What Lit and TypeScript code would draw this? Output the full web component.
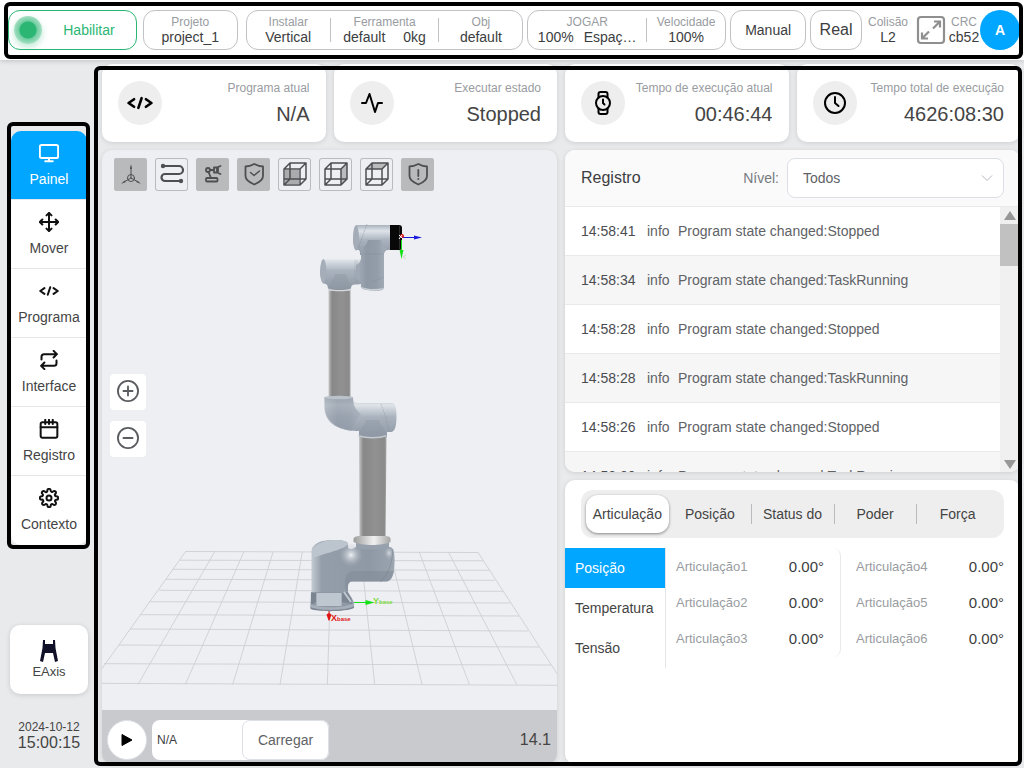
import { LitElement, html, svg, css } from "lit";
import { customElement, state } from "lit/decorators.js";
import { classMap } from "lit/directives/class-map.js";

const line = (size: number, body: unknown, width = 2) => html`
  <svg width=${size} height=${size} viewBox="0 0 24 24" fill="none" stroke="currentColor"
    stroke-width=${width} stroke-linecap="round" stroke-linejoin="round" aria-hidden="true">${body}</svg>`;

const icons = {
  monitor: svg`<rect x="1" y="2.500" width="22" height="15.500" rx="2"/><path d="M12 18v4M7.500 22h9"/>`,
  move: svg`<path d="M12 1v22M1 12h22M9 4l3-3 3 3M9 20l3 3 3-3M4 9l-3 3 3 3M20 9l3 3-3 3"/>`,
  code: svg`<path d="M6.500 8.500L1.500 12l5 3.500M17.500 8.500l5 3.500-5 3.500M13.500 7.500l-3 9"/>`,
  repeat: svg`<path d="M17.500 1l4 4-4 4M3 11.500V8a3 3 0 0 1 3-3h15M6.500 23l-4-4 4-4M21 12.500V16a3 3 0 0 1-3 3H3"/>`,
  calendar: svg`<rect x="2" y="4" width="20" height="18.500" rx="2"/><path d="M2 10h20M7.500 1v5M16.500 1v5M12 1v5"/>`,
  gear: svg`<circle cx="12" cy="12" r="3"/><path d="M19.400 15a1.650 1.650 0 0 0 .33 1.820l.06.06a2 2 0 1 1-2.830 2.830l-.06-.06a1.650 1.650 0 0 0-2.800 1.180V21a2 2 0 0 1-4 0v-.09a1.650 1.650 0 0 0-2.910-1.080l-.06.06a2 2 0 1 1-2.830-2.830l.06-.06A1.650 1.650 0 0 0 3.090 14H3a2 2 0 0 1 0-4h.09a1.650 1.650 0 0 0 1.080-2.910l-.06-.06a2 2 0 1 1 2.830-2.830l.06.06A1.650 1.650 0 0 0 10 3.090V3a2 2 0 0 1 4 0v.09a1.650 1.650 0 0 0 2.910 1.080l.06-.06a2 2 0 1 1 2.830 2.830l-.06.06A1.650 1.650 0 0 0 20.910 10H21a2 2 0 0 1 0 4h-.09a1.650 1.650 0 0 0-1.510 1z"/>`,
  pulse: svg`<path d="M2 12h4L9.500 3l5.500 18 3-9h4"/>`,
  watch: svg`<circle cx="12" cy="12" r="7"/><path d="M12 8.500V12l1.500 1.500M7.500 6.500V3a2 2 0 0 1 2-2h5a2 2 0 0 1 2 2v3.500M7.500 17.500V21a2 2 0 0 0 2 2h5a2 2 0 0 0 2-2v-3.500"/>`,
  clock: svg`<circle cx="12" cy="12" r="10"/><path d="M12 6v6l3.500 3"/>`,
  plus: svg`<circle cx="12" cy="12" r="11"/><path d="M12 7v10M7 12h10"/>`,
  minus: svg`<circle cx="12" cy="12" r="11"/><path d="M7 12h10"/>`,
};

const cube = (face: unknown) => svg`${face}
  <g stroke-width="1.500"><path d="M6 11h16v16H6zM12 5h16v16H22M12 5v16H6M6 11l6-6M22 11l6-6M22 27l6-6M6 27l6-6M12 21h10"/></g>`;
const shield = svg`<path d="M8.500 8.500c3.500 0 6-1 8.800-2.500 2.800 1.500 5.300 2.500 8.700 2.500v9.500c0 4-4 6.500-8.700 8.500-4.700-2-8.800-4.500-8.800-8.500z" stroke-width="1.800"/>`;

const tools = [
  { label: "Eixos", on: true, art: svg`<g stroke-width="1"><circle cx="17" cy="20" r="3.500"/><path d="M17 20V9M17 20l-8 4.500M17 20l8 4.500"/><path d="M17 6l1 5h-2zM7 26l4-3.500.8 1.500zM27 26l-4-3.500-.8 1.500z" fill="currentColor" stroke="none"/></g>` },
  { label: "Trajeto", on: false, art: svg`<g stroke-width="2.200"><path d="M8 8h16a3.800 3.800 0 0 1 0 8H10a3.500 3.500 0 0 0 0 7h15"/></g><circle cx="8" cy="8" r="2.200" fill="currentColor" stroke="none"/><circle cx="26" cy="23" r="2.200" fill="currentColor" stroke="none"/>` },
  { label: "Braço", on: true, art: svg`<g stroke-width="1.800"><rect x="10" y="20" width="11.500" height="3.500" rx="1"/><circle cx="12" cy="12" r="2"/><path d="M12.500 14l2.500 6M14 12h4M18 9.500v5h3l3.500 1.500M21 14.500v-5l3.500-1.500M21 9.500h-3M22 10.500v3"/></g>` },
  { label: "Segurança", on: true, art: svg`${shield}<path d="M13.500 14.500l3.500 3 5.500-4.500" stroke-width="1.500"/>` },
  { label: "Vista frontal", on: false, art: cube(svg`<path d="M7 12h14v14H7z" fill="#a9abad" stroke="none"/>`) },
  { label: "Vista lateral", on: false, art: cube(svg`<path d="M22 11l6-6v16l-6 6z" fill="#b9bbbd" stroke="none"/>`) },
  { label: "Vista superior", on: false, art: cube(svg`<path d="M6 11l6-6h16l-6 6z" fill="#b9bbbd" stroke="none"/>`) },
  { label: "Aviso", on: true, art: svg`${shield}<path d="M17.300 12v6" stroke-width="1.800"/><circle cx="17.300" cy="21" r="1" fill="currentColor" stroke="none"/>` },
];

const navItems = [
  { label: "Painel", icon: icons.monitor },
  { label: "Mover", icon: icons.move },
  { label: "Programa", icon: icons.code },
  { label: "Interface", icon: icons.repeat },
  { label: "Registro", icon: icons.calendar },
  { label: "Contexto", icon: icons.gear },
];

const stats = [
  { label: "Programa atual", value: "N/A", icon: icons.code },
  { label: "Executar estado", value: "Stopped", icon: icons.pulse },
  { label: "Tempo de execução atual", value: "00:46:44", icon: icons.watch },
  { label: "Tempo total de execução", value: "4626:08:30", icon: icons.clock },
];

const logs = [
  ["14:58:41", "Stopped"],
  ["14:58:34", "TaskRunning"],
  ["14:58:28", "Stopped"],
  ["14:58:28", "TaskRunning"],
  ["14:58:26", "Stopped"],
  ["14:58:20", "TaskRunning"],
];

// Floor grid in scene units: [left x, left y, right x, right y] per row
const floorRows = [
  [185, 551.5, 478, 552.5], [180, 560.2, 483, 560.8], [173, 569.3, 489, 570.3], [166, 579.3, 495, 580.3],
  [159, 590.3, 503, 591.3], [150, 601.7, 510, 603], [140, 614.7, 519, 616], [130, 629, 528, 631],
  [118.7, 645, 539, 647], [104, 663.7, 551, 665], [90, 683.3, 566, 685.3],
];
const floorColumns = Array.from({ length: 11 }, (_, i) => [185.3 + i * 29.24, 90.6 + i * 47.35]);

const scene = html`
  <svg class="scene" viewBox="102 150 455 560" preserveAspectRatio="xMidYMid slice" role="img" aria-label="Modelo 3D do robô">
    <defs>
      <linearGradient id="h" x1="0" y1="0" x2="0" y2="1">
        <stop offset="0" stop-color="#a9b2bc"/><stop offset=".2" stop-color="#dfe4e9"/><stop offset=".5" stop-color="#a9b2bd"/><stop offset="1" stop-color="#8f99a5"/>
      </linearGradient>
      <linearGradient id="v" x1="0" y1="0" x2="1" y2="0">
        <stop offset="0" stop-color="#a6afba"/><stop offset=".35" stop-color="#8f99a5"/><stop offset=".7" stop-color="#939da9"/><stop offset="1" stop-color="#a5aeb9"/>
      </linearGradient>
      <linearGradient id="body" x1="0" y1="0" x2="1" y2="0">
        <stop offset="0" stop-color="#c3cad2"/><stop offset=".12" stop-color="#949eaa"/><stop offset=".7" stop-color="#8f99a5"/><stop offset="1" stop-color="#9ba5b0"/>
      </linearGradient>
      <linearGradient id="tube" x1="0" y1="0" x2="1" y2="0">
        <stop offset="0" stop-color="#c8c9ca"/><stop offset=".08" stop-color="#a5a5a5"/><stop offset=".16" stop-color="#888"/><stop offset=".6" stop-color="#919191"/><stop offset=".92" stop-color="#8a8a8a"/><stop offset="1" stop-color="#a5a5a5"/>
      </linearGradient>
      <linearGradient id="ring" x1="0" y1="0" x2="1" y2="0">
        <stop offset="0" stop-color="#9c9c9c"/><stop offset=".55" stop-color="#f1f1f1"/><stop offset="1" stop-color="#a6a6a6"/>
      </linearGradient>
      <radialGradient id="glow"><stop offset="0" stop-color="#eef1f4"/><stop offset="1" stop-color="#a4adb8" stop-opacity="0"/></radialGradient>
    </defs>
    <g stroke="#cdcfd1" stroke-width=".9">
      ${floorRows.map(([a, b, c, d]) => svg`<line x1=${a} y1=${b} x2=${c} y2=${d}/>`)}
      ${floorColumns.map(([a, b]) => svg`<line x1=${a} y1="552" x2=${b} y2="684.500"/>`)}
    </g>

    <path d="M328.500 288h22v110h-22z" fill="url(#tube)"/>
    <path d="M359 434h27.500l-1 106h-26z" fill="url(#tube)"/>

    <path d="M323 259.500h36c4 0 6-2 9-7v28c-3 3-7 4-12 4-4 0-5 1-5 5h-23c0-4-1-6-5-6-4-5-4-19 0-24z" fill="url(#h)"/>
    <path d="M356 225h35v25h-4c-2 1-3 2-3 5h-24c0-4 0-3-1-5h-3c-4-4-4-20 0-25z" fill="url(#h)"/>
    <path d="M361 249c4-2 6-5 7-9h13c1 4 3 7 5 9-1.500 1-2 3-2 6v32c0 2-1 3-4 3.500-6 .5-13 0-17-1.500-2-1-2-2-2-4v-4c-3-1-5-2-5-4v-12c3-1 4-3 5-6z" fill="url(#v)"/>
    <path d="M360 286.500c5 2.500 15 3.500 23.500 1.500-1 2-4 2.500-8 2.500-6 0-13-.5-15.500-4z" fill="#c9d0d6"/>
    <ellipse cx="356" cy="238" rx="3" ry="12.500" fill="#a3acb7"/>
    <path d="M367 224c-4 10-6 18-9 24M362 254h22M372 282l12-5" stroke="#79838f" stroke-width=".4" stroke-dasharray="2 1" fill="none"/>
    <path d="M355 260v23M357 260v24" stroke="#8a949f" stroke-width=".5" opacity=".6"/>
    <path d="M329 289c0-8 5-9 6-15h11c1 6 5 8 5 15z" fill="#8b95a1" opacity=".4"/>
    <path d="M328 288.500c7 2 16 2 23 0v2c-6 1-16 1-23 0z" fill="#d6dade"/>
    <ellipse cx="323.300" cy="271" rx="3" ry="12" fill="#a4adb8"/>
    <path d="M390 225h9c2 0 3 1 3 3v19c0 2-1 3-3 3h-9z" fill="#080808"/>
    <path d="M399.500 226v23" stroke="#444" stroke-width=".6"/>

    <path d="M324.500 397h28.500c0 5 1 6 5 6h34c3 0 4.500 4 4.500 13 0 10-1.500 15-5 16h-4.500v5h-28v-6c-19 0-34-8-34.500-26z" fill="url(#h)"/>
    <path d="M324.500 397h28.500c0 8 2 12 8 17-5 6-8 12-9 17-16-2-28-9-27.500-25z" fill="url(#v)" opacity=".7"/>
    <path d="M359 436c0-8 6-10 7-16h13c1 6 7 8 7 16z" fill="#8d97a3" opacity=".4"/>
    <ellipse cx="338.700" cy="397.500" rx="14.400" ry="1.800" fill="#bac2ca"/>
    <path d="M358.500 435c8 2.500 20 2.500 28 0v1.500c-7 2.500-21 2.500-28 0z" fill="#c2c9d0"/>
    <path d="M381 404c3 8 6 16 8 28" stroke="#818b97" stroke-width=".4" stroke-dasharray="2 1" fill="none"/>

    <path d="M311.500 550c1-6 9-10 22-10 9 0 14 1 14.500 4v4c3 2 5 1 8-1h34c3 0 5 5 4.500 16-.3 12-3.500 18.500-8 18.500h-34c-3 0-4.500 2-4.500 5v7c-8 4-29 4-36.500 0z" fill="url(#body)"/>
    <path d="M312.500 556c-2-9 7-16 22-16 8 0 13 1 13.500 4 0 4-21 9-32.500 13-1 .5-2.500 0-3-1z" fill="#bcc4cd"/>
    <path d="M352 571h42c-1 7-4 10.500-8 10.500h-34c-3 0-4.500 2-4.500 5v5c-4-4-4-18 4.500-20.500z" fill="#808a97" opacity=".5"/>
    <ellipse cx="351" cy="555" rx="12" ry="12" fill="url(#glow)"/>
    <ellipse cx="389" cy="553" rx="5" ry="7" fill="url(#glow)" opacity=".7"/>
    <path d="M393 549c-1 14-4 25-13 33" stroke="#77818d" stroke-width=".5" fill="none"/>
    <path d="M356 542h33v6c-8 2-25 2-33 0z" fill="#97a1ad"/>
    <path d="M353.500 539c0-2 3-3 6-3h26c3 0 5 1 5 3v3c-8 4-29 4-37 0z" fill="url(#ring)"/>
    <path d="M311 592l-.5 15c4 4 37 5 43.500-1 1-4-3-9-6-14z" fill="#8f99a5"/>
    <path d="M316.500 593h25v13h-25z" fill="#bec7d0"/>
    <path d="M311 593h5v9l-5 3zM342 593l5-1 5 8v4l-10-2z" fill="#7b8591"/>
    <path d="M344 592l7 10" stroke="#c0c8d0" stroke-width="2"/>
    <path d="M310.500 604c10 5 36 4 43.500-1v4c-8 5-36 5-43.500 1z" fill="#a5aeb9"/>
    <path d="M310.500 607c8 4 36 4 43.500-1v2c-8 4-36 4-43.500 1z" fill="#7e8894"/>

    <path d="M402 237.500h13" stroke="#1b1be0"/><path d="M414 235.500l8 2-8 2z" fill="#1b1be0"/>
    <path d="M401.500 240v12" stroke="#16e016"/><path d="M399.500 250h4l-2 9z" fill="#16e016"/>
    <circle cx="402" cy="236" r="2" fill="#e01616"/><path d="M399 235l3 3m0-3l-3 4" stroke="#fff" stroke-width="1"/>
    <path d="M406 255l-3 2 3 2" stroke="#ccc" stroke-width=".8" fill="none"/>
    <path d="M354 602.500h12" stroke="#16e016"/><path d="M365.500 600l9 2.500-9 2.500z" fill="#16e016"/>
    <path d="M329 611v4" stroke="#e01616"/><path d="M326.500 614.500l2.500-1.500 2.500 1.500-2 6h-1z" fill="#e01616"/>
    <text x="373" y="604" class="axis axis-y">Y<tspan class="sub">base</tspan></text>
    <text x="331" y="621" class="axis axis-x">X<tspan class="sub">base</tspan></text>
  </svg>`;

@customElement("app-root")
export class AppRoot extends LitElement {
  @state() private page = 0;
  @state() private tab = 0;
  @state() private measure = 0;

  static styles = css`
    :host {
      display: grid;
      grid-template-rows: 60px minmax(0, 1fr);
      height: 100vh;
      overflow: hidden;
      background: #e9eaec;
      color: #3c3d40;
      font: 14px/16px "Liberation Sans", Arial, sans-serif;
    }
    * { box-sizing: border-box; }
    button, input, select { font: inherit; color: inherit; margin: 0; padding: 0; border: 0; background: none; }
    button, select { cursor: pointer; }
    svg { display: block; }
    h2, p { margin: 0; font-weight: 400; }

    .framed { position: relative; }
    .framed::after {
      content: "";
      position: absolute;
      border: 4px solid #000;
      border-radius: 6px;
      pointer-events: none;
      z-index: 2;
    }

    .top {
      display: flex;
      align-items: center;
      padding: 0 4px 0 8px;
      background: #fff;
      box-shadow: 0 1px 5px rgba(0, 0, 0, 0.18);
      z-index: 1;
    }
    .top::after { inset: 2px 1px 1px 4px; }
    .box {
      display: flex;
      align-items: center;
      justify-content: center;
      height: 40px;
      min-width: 0;
      border: 1px solid #c0c2c6;
      border-radius: 12px;
      background: #fff;
    }
    .enable { flex: 129 1 129px; border-color: #2bb673; color: #2bb673; padding-left: 5px; }
    .enable span { flex: 1; }
    .lamp {
      width: 28px;
      height: 28px;
      border-radius: 50%;
      background: radial-gradient(circle, #2bb673 0 8px, #6fcda0 9px, #a6e0c4 14px);
      box-shadow: 0 3px 6px rgba(43, 182, 115, 0.3);
    }
    .project { flex: 95 1 95px; margin-left: 6px; }
    .setup { flex: 278 1 278px; margin-left: 8px; }
    .play { flex: 199 1 199px; margin-left: 4px; }
    .mode { flex: 76 1 76px; margin-left: 4px; }
    .real { flex: 52 1 52px; margin-left: 4px; font-size: 16px; }
    .collision { flex: 40 1 40px; margin-left: 6px; }
    .expand { margin: 0 2px 0 8px; color: #8f8f8f; }
    .crc { width: 32px; }
    .cell { display: flex; flex-direction: column; justify-content: center; align-items: center; white-space: nowrap; }
    .cell small { font-size: 12px; line-height: 14px; color: #999ca1; }
    .pair { display: flex; }
    .setup .cell, .play .cell { flex: 84 1 0; height: 24px; }
    .setup .cell.wide { flex-grow: 109; }
    .play .cell { flex-grow: 79; }
    .play .cell.wide { flex-grow: 119; }
    .cell + .cell { border-left: 1px solid #c0c2c6; }
    .setup .pair { gap: 18px; }
    .play .pair { gap: 10px; }
    .avatar {
      flex: none;
      width: 40px;
      height: 40px;
      border-radius: 50%;
      background: #00a6ff;
      color: #fff;
      font-weight: 700;
    }

    .body { display: grid; grid-template-columns: 98px minmax(0, 1fr); min-height: 0; }
    .side { display: flex; flex-direction: column; align-items: center; padding: 71px 0 17px; }
    .nav { width: 76px; }
    .nav::after { inset: -9px -3px -4px -4px; }
    .nav a {
      display: flex;
      flex-direction: column;
      align-items: center;
      gap: 8px;
      height: 69px;
      padding-top: 12px;
      border-bottom: 1px solid #e6e7e9;
      background: #fff;
      color: #444;
      text-decoration: none;
    }
    .nav a svg { color: #111; }
    .nav a:first-child { border-radius: 10px 10px 0 0; }
    .nav a:last-child { border-radius: 0 0 10px 10px; border-bottom: 0; }
    .nav a.on { background: #00a6ff; color: #fff; }
    .nav a.on svg { color: #fff; }
    .eaxis {
      display: flex;
      flex-direction: column;
      align-items: center;
      justify-content: center;
      gap: 2px;
      width: 78px;
      height: 69px;
      margin: auto 0 26px;
      border-radius: 10px;
      background: #fff;
      box-shadow: 0 1px 5px rgba(0, 0, 0, 0.15);
      font-size: 13px;
      color: #444;
    }
    .now { display: flex; flex-direction: column; align-items: center; color: #444; }
    .now span { font-size: 12px; line-height: 14px; }
    .now strong { font-size: 16px; line-height: 17px; font-weight: 400; }

    .main {
      display: grid;
      grid-template-rows: 78px minmax(0, 1fr);
      gap: 8px;
      padding: 4px;
      min-height: 0;
    }
    .main::after { inset: 6px 2px 2px -4px; }
    .stats { display: grid; grid-template-columns: repeat(4, minmax(0, 1fr)); gap: 8px; }
    .card { background: #fff; border-radius: 10px; box-shadow: 0 1px 5px rgba(0, 0, 0, 0.12); }
    .stat { display: flex; align-items: center; justify-content: space-between; padding: 0 16px; white-space: nowrap; }
    .disc { display: grid; place-items: center; width: 44px; height: 44px; border-radius: 50%; background: #eee; color: #000; }
    .figures { display: flex; flex-direction: column; align-items: flex-end; gap: 8px; }
    .figures small { font-size: 12px; line-height: 14px; color: #999ca1; }
    .figures strong { font-size: 20px; line-height: 22px; font-weight: 400; color: #444; }

    .columns { display: grid; grid-template-columns: repeat(2, minmax(0, 1fr)); gap: 8px; min-height: 0; }
    .robot { display: grid; grid-template-rows: minmax(0, 1fr) 54px; overflow: hidden; background: #eeeff3; }
    .stage { display: grid; min-height: 0; }
    .stage > * { grid-area: 1 / 1; }
    .scene { width: 100%; height: 100%; min-height: 0; }
    .axis { font-size: 9px; font-weight: 700; }
    .axis-x { fill: #e01616; }
    .axis-y { fill: #7ddc3c; }
    .sub { font-size: 6px; }
    .tools { display: flex; gap: 8px; align-self: start; padding: 8px 12px; z-index: 1; }
    .tool { width: 33px; height: 33px; border-radius: 3px; box-shadow: inset 0 0 0 1px #b9bbbd; color: #4d4f52; }
    .tool.on { background: #b9babb; }
    .zoom { display: flex; flex-direction: column; gap: 11px; align-self: center; justify-self: start; padding: 0 8px; margin-bottom: 29px; z-index: 1; }
    .zoom button { display: grid; place-items: center; width: 36px; height: 36px; padding-bottom: 2px; border-radius: 4px; background: #fff; color: #5a5c60; }
    .player { display: flex; align-items: center; padding: 6px 6px 0 5px; background: #c9cacd; }
    .run { display: grid; place-items: center; width: 40px; height: 40px; border-radius: 50%; background: #fff; border: 1px solid #dcdfe6; }
    .loader { display: flex; width: 177px; height: 40px; margin: 0 auto 0 5px; border-radius: 8px; background: #fff; }
    .loader input { flex: 1; min-width: 0; padding-left: 5px; font-size: 12px; }
    .loader button { width: 87px; border: 1px solid #dcdfe6; border-radius: 8px; color: #606266; }
    .speed { font-size: 16px; color: #444; }

    .right { display: grid; grid-template-rows: minmax(0, 322fr) minmax(0, 284fr); gap: 8px; min-height: 0; }
    .log { display: grid; grid-template-rows: 57px minmax(0, 1fr); overflow: hidden; }
    .log-head { display: flex; align-items: center; padding: 0 16px; background: #fafafa; border-bottom: 1px solid #e8e9eb; }
    .log-head h2 { flex: 1; font-size: 16px; line-height: 18px; }
    .log-head label { color: #777a7f; margin-right: 8px; }
    .picker { display: grid; align-items: center; width: 217px; }
    .picker > * { grid-area: 1 / 1; }
    .picker select { appearance: none; width: 100%; height: 40px; padding: 0 32px 0 15px; border: 1px solid #dcdfe6; border-radius: 8px; background: #fff; color: #606266; }
    .picker svg { justify-self: end; margin-right: 10px; color: #b4b8c0; pointer-events: none; }
    .log-body { display: grid; grid-template-columns: minmax(0, 1fr) 20px; min-height: 0; }
    .rows { margin: 0; padding: 0; list-style: none; overflow: hidden; color: #606266; }
    .rows li { display: flex; align-items: center; height: 49px; padding: 0 16px; border-bottom: 1px solid #e8e9eb; background: #fff; }
    .rows li:nth-child(even) { background: #f6f6f6; }
    .rows time { width: 66px; color: #4a4c50; }
    .rows span { width: 31px; }
    .bar { display: flex; flex-direction: column; align-items: center; padding: 4px 0 3px; background: #f0f0f0; color: #979797; }
    .thumb { width: 100%; height: 42px; margin: 4px 0 auto; background: #c1c1c1; }

    .joints { padding: 10px 0 0; overflow: hidden; }
    .tabs { display: grid; grid-template-columns: repeat(5, minmax(0, 1fr)); margin: 0 16px 10px; padding: 5px; border-radius: 12px; background: #eee; }
    .tabs button { position: relative; height: 38px; border-radius: 12px; color: #444; white-space: nowrap; }
    .tabs button.on { background: #fff; box-shadow: 0 1px 3px rgba(0, 0, 0, 0.45); }
    .tabs button.split::before { content: ""; position: absolute; left: 0; top: 9px; height: 20px; border-left: 1px solid #b8babd; }
    .detail { display: grid; grid-template-columns: 101px minmax(0, 175fr) minmax(0, 179fr); align-items: start; }
    .measures { display: flex; flex-direction: column; border-right: 1px solid #e4e5e7; }
    .measures button { height: 40px; padding-left: 10px; text-align: left; color: #444; }
    .measures button.on { background: #00a6ff; color: #fff; }
    .axes { margin: 0; padding: 1px 16px 0 10px; }
    .axes.first { border-right: 1px solid #e8e9eb; border-radius: 8px; }
    .axes + .axes { padding-left: 15px; }
    .axes div { display: flex; align-items: center; justify-content: space-between; height: 36px; }
    .axes dt { font-size: 13px; color: #999ca1; }
    .axes dd { margin: 0; font-size: 15px; }
  `;

  private cell(label: string, values: string[], extra = "") {
    return html`<div class="cell ${extra}"><small>${label}</small><div class="pair">${values.map((v) => html`<span>${v}</span>`)}</div></div>`;
  }

  private header() {
    return html`
      <header class="top framed">
        <button class="box enable"><i class="lamp"></i><span>Habilitar</span></button>
        <button class="box project">${this.cell("Projeto", ["project_1"])}</button>
        <div class="box setup">
          ${this.cell("Instalar", ["Vertical"])}${this.cell("Ferramenta", ["default", "0kg"], "wide")}${this.cell("Obj", ["default"])}
        </div>
        <div class="box play">${this.cell("JOGAR", ["100%", "Espaç…"], "wide")}${this.cell("Velocidade", ["100%"])}</div>
        <button class="box mode">Manual</button>
        <button class="box real">Real</button>
        <div class="collision">${this.cell("Colisão", ["L2"])}</div>
        <button class="expand" aria-label="Tela cheia">
          <svg width="30" height="30" viewBox="0 0 30 30" fill="none" stroke="currentColor" stroke-width="2.200">
            <rect x="2" y="2" width="26" height="26" rx="3"/>
            <path d="M18 6.500h6v6M24 6.500l-7 7M12 23.500H6v-6M6 23.500l7-7" stroke-width="2.200"/>
          </svg>
        </button>
        <div class="crc">${this.cell("CRC", ["cb52"])}</div>
        <button class="avatar" aria-label="Conta">A</button>
      </header>`;
  }

  private sidebar() {
    return html`
      <aside class="side">
        <nav class="nav framed">
          ${navItems.map((item, i) => html`
            <a href="#" class=${classMap({ on: i === this.page })} @click=${(e: Event) => { e.preventDefault(); this.page = i; }}>
              ${line(20, item.icon, 2.4)}<span>${item.label}</span>
            </a>`)}
        </nav>
        <button class="eaxis">
          <svg width="18" height="22" viewBox="0 0 18 22" fill="#101028" aria-hidden="true"><path d="M3 0h2v4h8V0h2l.500 8L18 21l-3 1-2-9H5l-2 9-3-1L2.500 8z"/></svg>
          <span>EAxis</span>
        </button>
        <div class="now"><span>2024-10-12</span><strong>15:00:15</strong></div>
      </aside>`;
  }

  private robot() {
    return html`
      <section class="card robot">
        <div class="stage">
          ${scene}
          <div class="tools">
            ${tools.map((t) => html`
              <button class="tool ${classMap({ on: t.on })}" aria-label=${t.label}>
                <svg width="33" height="33" viewBox="0 0 33 33" fill="none" stroke="currentColor" stroke-linejoin="round" stroke-linecap="round">${t.art}</svg>
              </button>`)}
          </div>
          <div class="zoom">
            <button aria-label="Ampliar">${line(22, icons.plus)}</button>
            <button aria-label="Reduzir">${line(22, icons.minus)}</button>
          </div>
        </div>
        <div class="player">
          <button class="run" aria-label="Executar"><svg width="12" height="14" viewBox="0 0 12 14"><path d="M1 1.500v11L11 7z" stroke="#000" stroke-linejoin="round"/></svg></button>
          <div class="loader"><input type="text" value="N/A" aria-label="Programa" /><button>Carregar</button></div>
          <span class="speed">14.1</span>
        </div>
      </section>`;
  }

  private log() {
    return html`
      <section class="card log">
        <div class="log-head">
          <h2>Registro</h2>
          <label for="level">Nível:</label>
          <div class="picker">
            <select id="level"><option>Todos</option></select>
            <svg width="14" height="14" viewBox="0 0 14 14" fill="none" stroke="currentColor"><path d="M2 4.500l5 5 5-5"/></svg>
          </div>
        </div>
        <div class="log-body">
          <ul class="rows">
            ${logs.map(([time, value]) => html`<li><time>${time}</time><span>info</span><p>Program state changed:${value}</p></li>`)}
          </ul>
          <div class="bar" aria-hidden="true">
            <svg width="14" height="9" viewBox="0 0 14 9"><path d="M7 0l6 9H1z" fill="currentColor"/></svg>
            <div class="thumb"></div>
            <svg width="14" height="9" viewBox="0 0 14 9"><path d="M7 9L1 0h12z" fill="currentColor"/></svg>
          </div>
        </div>
      </section>`;
  }

  private axes(numbers: number[], extra: string) {
    return html`<dl class="axes ${extra}">${numbers.map((n) => html`<div><dt>Articulação${n}</dt><dd>0.00°</dd></div>`)}</dl>`;
  }

  private joints() {
    return html`
      <section class="card joints">
        <div class="tabs" role="tablist">
          ${["Articulação", "Posição", "Status do", "Poder", "Força"].map((name, i) => html`
            <button role="tab" aria-selected=${i === this.tab} @click=${() => (this.tab = i)}
              class=${classMap({ on: i === this.tab, split: i !== this.tab && i > 0 && i - 1 !== this.tab })}>${name}</button>`)}
        </div>
        <div class="detail">
          <div class="measures">
            ${["Posição", "Temperatura", "Tensão"].map((name, i) => html`
              <button class=${classMap({ on: i === this.measure })} @click=${() => (this.measure = i)}>${name}</button>`)}
          </div>
          ${this.axes([1, 2, 3], "first")}${this.axes([4, 5, 6], "")}
        </div>
      </section>`;
  }

  render() {
    return html`
      ${this.header()}
      <div class="body">
        ${this.sidebar()}
        <main class="main framed">
          <div class="stats">
            ${stats.map((s) => html`
              <section class="card stat">
                <span class="disc">${line(s.icon === icons.code ? 26 : 24, s.icon, s.icon === icons.code ? 2.4 : 2)}</span>
                <div class="figures"><small>${s.label}</small><strong>${s.value}</strong></div>
              </section>`)}
          </div>
          <div class="columns">
            ${this.robot()}
            <div class="right">${this.log()}${this.joints()}</div>
          </div>
        </main>
      </div>`;
  }
}
